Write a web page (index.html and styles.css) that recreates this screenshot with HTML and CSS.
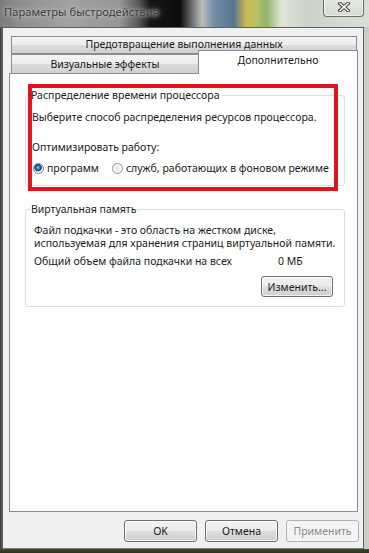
FILE: index.html
```html
<!DOCTYPE html>
<html lang="ru">
<head>
<meta charset="utf-8">
<title>Параметры быстродействия</title>
<link rel="stylesheet" href="styles.css">
</head>
<body>
<div class="window">
  <div class="titlebar">
    <span class="title">Параметры быстродействия</span>
    <div class="close">
      <svg width="14" height="10" viewBox="0 0 14 10">
        <path d="M3 1.5 L11 8.5 M11 1.5 L3 8.5" stroke="#3c3c3c" stroke-width="3.6" stroke-linecap="square" fill="none"/>
        <path d="M3 1.5 L11 8.5 M11 1.5 L3 8.5" stroke="#ffffff" stroke-width="1.6" stroke-linecap="square" fill="none"/>
      </svg>
    </div>
  </div>
  <div class="client">
    <div class="tabs">
      <div class="tab tab-wide">Предотвращение выполнения данных</div>
      <div class="tab-row">
        <div class="tab tab-left">Визуальные эффекты</div>
        <div class="tab tab-selected">Дополнительно</div>
      </div>
    </div>
    <div class="panel">
      <fieldset class="group group-cpu">
        <legend>Распределение времени процессора</legend>
        <p class="line l-choose">Выберите способ распределения ресурсов процессора.</p>
        <p class="line l-opt">Оптимизировать работу:</p>
        <div class="radios">
          <label class="radio-item"><span class="radio checked"></span>программ</label>
          <label class="radio-item"><span class="radio"></span>служб, работающих в фоновом режиме</label>
        </div>
      </fieldset>
      <fieldset class="group group-vm">
        <legend>Виртуальная память</legend>
        <p class="para">Файл подкачки - это область на жестком диске,</p>
        <p class="para para-2">используемая для хранения страниц виртуальной памяти.</p>
        <div class="total"><span class="total-label">Общий объем файла подкачки на всех</span><span>0 МБ</span></div>
        <div class="change-row"><button class="btn btn-change">Изменить...</button></div>
      </fieldset>
      <div class="highlight"></div>
    </div>
    <div class="buttons">
      <button class="btn">OK</button>
      <button class="btn">Отмена</button>
      <button class="btn disabled">Применить</button>
    </div>
  </div>
</div>
</body>
</html>
```
FILE: styles.css
```css
html, body {
  margin: 0;
  padding: 0;
}
body {
  width: 369px;
  height: 553px;
  overflow: hidden;
  font-family: "Noto Sans", "Open Sans", sans-serif;
  font-size: 10.5px;
  color: #1b1b1b;
  white-space: nowrap;
}
.window {
  position: relative;
  height: 553px;
  display: flex;
  flex-direction: column;
  background:
    linear-gradient(90deg,
      #7a7a7a 0, #8e8e8e 20px, #a2a2a2 70px, #959595 120px, #5a5a5a 138px,
      #161616 150px, #0b0b0b 180px, #6d7070 192px, #b9bdbb 202px,
      #6f8ea8 214px, #56768f 234px, #cdb94e 246px, #b9c36a 256px,
      #8fb36a 266px, #dfe6d8 282px, #ccd3c8 305px, #d3d9cf 340px, #dadfd6 369px) top / 100% 27px no-repeat,
    linear-gradient(180deg, #3e4a2e 0, #2a3320 100%) bottom / 100% 4px no-repeat,
    linear-gradient(90deg, #3a3a3a 0, #5e5e5e 2px, transparent 2px, transparent 363px, #c9cfc5 364px) 0 0 / 100% 100% no-repeat,
    linear-gradient(180deg, #cdd3c8 0, #d9dfd6 120px, #9fa89a 200px, #dfe4da 300px, #b9cf92 380px, #88ad4a 460px, #6e9a36 553px);
}
.titlebar {
  height: 27px;
  flex: none;
  display: flex;
  align-items: flex-start;
  justify-content: space-between;
}
.title {
  margin: 4px 0 0 4px;
  font-family: "Noto Sans", sans-serif;
  font-size: 11.2px;
  line-height: 16px;
  color: #3d3d3d;
  text-shadow: 0 0 6px #c8c8c8, 0 0 3px #c0c0c0;
}
.close {
  width: 39px;
  height: 17px;
  margin: -1px 5px 0 0;
  border: 1px solid #6b6e6a;
  border-top: none;
  border-radius: 0 0 4px 4px;
  background: linear-gradient(180deg, rgba(236,240,232,0.7) 0, rgba(214,220,208,0.6) 100%);
  box-shadow: inset 0 0 0 1px rgba(255,255,255,0.55);
  display: flex;
  align-items: center;
  justify-content: center;
}
.close svg {
  margin-top: -2px;
}
.client {
  flex: 1;
  margin: 0 5px 4px 2px;
  background: #f0f0f0;
  border: 1px solid #606060;
  border-bottom-color: #7a7a7a;
  padding: 8px 5px 0 6px;
  display: flex;
  flex-direction: column;
}
.tabs {
  display: flex;
  flex-direction: column;
  margin-bottom: -1px;
}
.tab {
  box-sizing: border-box;
  border: 1px solid #898c95;
  background: linear-gradient(180deg, #f4f4f4 0, #ececec 48%, #dcdcdc 52%, #d0d0d0 100%);
  text-align: center;
  color: #1b1b1b;
}
.tab-wide {
  height: 18px;
  line-height: 15px;
  margin: 0 1px 0 2px;
}
.tab-row {
  display: flex;
  align-items: flex-end;
}
.tab-left {
  width: 187px;
  height: 20px;
  line-height: 18px;
  margin-left: 2px;
  margin-top: -1px;
  border-right: none;
}
.tab-selected {
  position: relative;
  z-index: 1;
  flex: 1;
  height: 24px;
  margin-top: -4px;
  background: #ffffff;
  border-bottom: none;
  line-height: 19px;
}
.panel {
  position: relative;
  box-sizing: border-box;
  height: 439px;
  background: #ffffff;
  border: 1px solid #898c95;
  padding: 14px 12px 0 15px;
}
.group {
  margin: 0;
  border: 1px solid #d5dfe5;
  border-radius: 3px;
  padding: 0 11px 0 6px;
  min-width: 0;
}
.group legend {
  padding: 0 1px 0 0;
  margin-left: -1px;
  line-height: 14px;
}
.line {
  margin: 0;
  line-height: 14px;
}
.l-choose {
  margin-top: 8px;
}
.l-opt {
  margin-top: 16px;
}
.radios {
  margin-top: 7px;
  display: flex;
  align-items: center;
  gap: 13px;
  height: 14px;
  margin-left: 1px;
}
.radio-item {
  display: flex;
  align-items: center;
  gap: 3px;
  line-height: 14px;
}
.radio {
  box-sizing: border-box;
  width: 11px;
  height: 11px;
  border-radius: 50%;
  border: 1px solid #8f9498;
  background: radial-gradient(circle at 50% 50%, #e2e4e6 0, #f2f3f4 3px, #fbfbfb 5px);
}
.radio.checked {
  border-color: #6f8aa0;
  background: radial-gradient(circle at 45% 40%, #a8d4f2 0, #3b78ad 1.6px, #173f68 3.4px, #dde4ea 4px, #f4f6f8 5px);
}
.group-cpu {
  padding-bottom: 10px;
}
.group-vm {
  margin-top: 16px;
  padding-bottom: 9px;
}
.para {
  margin: 8px 0 0 2px;
  line-height: 13px;
}
.para-2 {
  margin-top: 0;
}
.total {
  display: flex;
  margin: 4px 0 0 2px;
  line-height: 14px;
}
.total-label {
  width: 244px;
}
.change-row {
  display: flex;
  justify-content: flex-end;
  margin-top: 8px;
}
.btn {
  box-sizing: border-box;
  width: 73px;
  height: 22px;
  padding: 0;
  font-family: "Noto Sans", "Open Sans", sans-serif;
  font-size: 10.5px;
  color: #1b1b1b;
  border: 1px solid #707070;
  border-radius: 3px;
  background: linear-gradient(180deg, #f2f2f2 0, #ebebeb 48%, #dddddd 52%, #cfcfcf 100%);
  box-shadow: inset 0 0 0 1px rgba(255,255,255,0.7);
}
.btn-change {
  width: 72px;
  height: 21px;
}
.btn.disabled {
  color: #8a8a8a;
  border-color: #adb2b5;
  background: #f4f4f4;
  box-shadow: none;
}
.buttons {
  display: flex;
  justify-content: flex-end;
  gap: 8px;
  margin-top: 8px;
  margin-right: -1px;
}
.highlight {
  position: absolute;
  left: 18px;
  top: 10px;
  width: 310px;
  height: 107px;
  box-sizing: border-box;
  border: 4px solid #e3141e;
  pointer-events: none;
}
```
